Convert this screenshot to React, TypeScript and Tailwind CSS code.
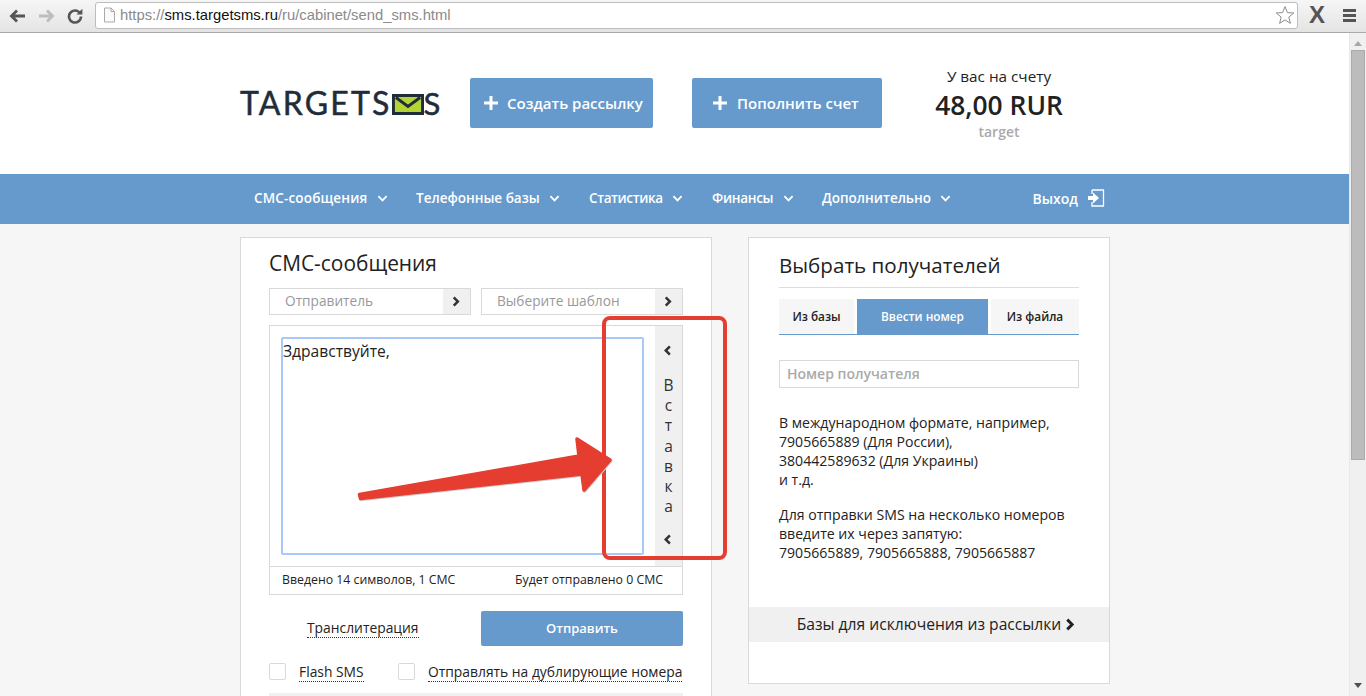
import React from "react";

const Chev = ({ dir = "right", cls = "" }: { dir?: "right" | "left" | "down"; cls?: string }) => {
  const d = dir === "right" ? "M3 1.5 L7.5 6 L3 10.5" : dir === "left" ? "M7.5 1.5 L3 6 L7.5 10.5" : "M1.5 3.5 L6 8 L10.5 3.5";
  return (
    <svg width="12" height="12" viewBox="0 0 12 12" className={cls} fill="none" stroke="currentColor" strokeWidth={dir === "down" ? 2 : 2.7}>
      <path d={d} />
    </svg>
  );
};

const Plus = () => (
  <svg width="14" height="14" viewBox="0 0 14 14" className="shrink-0">
    <path d="M5.5 0h3v5.5H14v3H8.5V14h-3V8.5H0v-3h5.5z" fill="#fff" />
  </svg>
);

const NavItem = ({ label, cls, labelCls }: { label: string; cls: string; labelCls: string }) => (
  <div className={`flex items-center shrink-0 ${cls}`}>
    <span className={`whitespace-nowrap ${labelCls}`}>{label}</span>
    <Chev dir="down" cls="w-[11px] h-[11px] ml-[10px] mt-[1px]" />
  </div>
);

const Dotted = ({ children }: { children: React.ReactNode }) => (
  <span className="border-b border-dotted border-[#333] leading-[17px] text-[13.85px] text-[#222]">{children}</span>
);

const SelectBox = ({ label, cls }: { label: string; cls: string }) => (
  <div className={`flex h-[27px] border border-[#d9d9d9] bg-white ${cls}`}>
    <div className="flex-1 pl-[15px] text-[13.7px] leading-[23px] text-[#999]">{label}</div>
    <div className="w-[27px] bg-[#f0f0f0] flex items-center justify-center text-[#333]">
      <Chev cls="w-[11px] h-[11px]" />
    </div>
  </div>
);

export default function App() {
  return (
    <div className="flex flex-col h-[696px] w-[1366px] overflow-hidden bg-white relative font-['Open_Sans','Noto_Sans',sans-serif]">
      {/* browser toolbar */}
      <div className="h-[33px] shrink-0 flex items-center border-b border-[#a9a9a9] bg-gradient-to-b from-[#f6f6f6] to-[#e4e4e4]">
        <div className="w-[95px] shrink-0 pl-[9px] flex items-center gap-[12px]">
          <svg width="17" height="14" viewBox="0 0 17 14" fill="#555">
            <path d="M7 0.5 L9 2.5 L6 5.5 H16 V8.5 H6 L9 11.5 L7 13.5 L0.5 7z" />
          </svg>
          <svg width="17" height="14" viewBox="0 0 17 14" fill="#bdbdbd">
            <path d="M10 0.5 L8 2.5 L11 5.5 H1 V8.5 H11 L8 11.5 L10 13.5 L16.5 7z" />
          </svg>
          <svg width="16" height="16" viewBox="0 0 16 16" fill="none">
            <path d="M13 5.2 A6 6 0 1 0 14 8.5" stroke="#555" strokeWidth="2.6" />
            <path d="M9.5 6.6 H15.4 V0.8z" fill="#555" />
          </svg>
        </div>
        <div className="w-[1203px] h-[27px] shrink-0 mb-[2px] flex items-center bg-white border border-[#bdbdbd] rounded-[3px] pl-[7px] pr-[2px]">
          <svg width="13" height="16" viewBox="0 0 13 16" fill="none" className="shrink-0">
            <path d="M1.5 1 H8 L11.5 4.5 V15 H1.5z M8 1 V4.5 H11.5" stroke="#aaa" fill="#fafafa" />
          </svg>
          <div className="ml-[4px] flex-1 text-[14.8px] font-['Liberation_Sans',sans-serif] whitespace-nowrap text-[#8a8a8a]">
            https://<span className="text-[#111]">sms.targetsms.ru</span>/ru/cabinet/send_sms.html
          </div>
          <svg width="20" height="20" viewBox="0 0 20 20" fill="none" stroke="#8c8c8c" strokeWidth="1">
            <path d="M10 1.6 L12.4 7.6 L18.8 8 L13.8 12.1 L15.4 18.4 L10 14.9 L4.6 18.4 L6.2 12.1 L1.2 8 L7.6 7.6z" />
          </svg>
        </div>
        <div className="w-[38px] shrink-0 text-center text-[24px] leading-none font-bold text-[#555] font-['Liberation_Sans',sans-serif] mb-[2px]">X</div>
        <div className="flex flex-col gap-[2px] w-[13px] shrink-0 mb-[2px] ml-[7px]">
          <div className="h-[3px] bg-[#555]" />
          <div className="h-[3px] bg-[#555]" />
          <div className="h-[3px] bg-[#555]" />
        </div>
      </div>

      <div className="flex flex-1 min-h-0">
        <div className="flex-1 min-w-0 flex flex-col bg-[#f6f6f6]">
          {/* header */}
          <div className="h-[141px] shrink-0 bg-white">
            <div className="ml-[240px] h-full flex items-start pt-[45px]">
              <div className="w-[230px] shrink-0 h-[50px] flex items-center">
                <div className="flex items-center text-[#1f2d3a] font-['Lato',sans-serif] text-[32px] leading-none tracking-[2.2px] [-webkit-text-stroke:0.5px_#1f2d3a]">
                  <span>TARGETS</span>
                  <svg width="32" height="21" viewBox="0 0 33 21" preserveAspectRatio="none" className="mr-[0px] mt-[2px] shrink-0">
                    <rect width="33" height="21" fill="#1f2d3a" />
                    <rect x="3" y="3" width="27" height="15" fill="#b5d334" />
                    <path d="M4 3.5 L16.5 12.5 L29 3.5" fill="none" stroke="#1f2d3a" strokeWidth="3" />
                  </svg>
                  <span className="tracking-normal text-[31px]">S</span>
                </div>
              </div>
              <div className="w-[183px] h-[50px] shrink-0 rounded-[2px] bg-[#6699cc] text-white text-[15px] font-semibold flex items-center pl-[14px] gap-[9px] whitespace-nowrap">
                <Plus />
                <span>Создать рассылку</span>
              </div>
              <div className="w-[190px] h-[50px] shrink-0 ml-[39px] rounded-[2px] bg-[#6699cc] text-white text-[15px] font-semibold flex items-center pl-[21px] gap-[10px] whitespace-nowrap">
                <Plus />
                <span>Пополнить счет</span>
              </div>
              <div className="w-[234px] shrink-0 flex flex-col items-center -mt-[12px]">
                <div className="text-[15.3px] leading-[20px] text-[#222]">У вас на счету</div>
                <div className="text-[26.4px] leading-[38px] font-semibold text-[#222]">48,00 RUR</div>
                <div className="text-[14px] leading-[15px] font-semibold text-[#aaa]">target</div>
              </div>
            </div>
          </div>
          {/* nav */}
          <div className="h-[50px] shrink-0 bg-[#6699cc]">
            <div className="ml-[254px] w-[851px] h-[48px] flex items-center text-white text-[13.5px] font-semibold">
              <NavItem label="СМС-сообщения" cls="w-[162px]" labelCls="w-[113px] tracking-[0.15px]" />
              <NavItem label="Телефонные базы" cls="w-[173px]" labelCls="w-[123px]" />
              <NavItem label="Статистика" cls="w-[123px]" labelCls="w-[73px] tracking-[-0.4px]" />
              <NavItem label="Финансы" cls="w-[110px]" labelCls="w-[61px] tracking-[-0.3px]" />
              <NavItem label="Дополнительно" cls="" labelCls="w-[108px]" />
              <div className="ml-auto flex items-center gap-[10px] text-[14px]">
                <span>Выход</span>
                <svg width="17" height="18" viewBox="0 0 17 18" fill="none">
                  <path d="M4 1 H15.5 V17 H4 V13 M4 5 V1" stroke="#fff" strokeWidth="1.3" />
                  <path d="M0 7 H5 V3.5 L11 9 L5 14.5 V11 H0z" fill="#fff" />
                </svg>
              </div>
            </div>
          </div>
          {/* content */}
          <div className="flex-1 min-h-0 pt-[13px] pl-[240px] flex items-start gap-[36px] overflow-hidden">
            {/* left */}
            <div className="w-[472px] h-[500px] shrink-0 bg-white border border-[#d9d9d9] pl-[28px] pr-[28px]">
              <div className="text-[20.9px] leading-[28px] text-[#222] mt-[11px]">СМС-сообщения</div>
              <div className="flex gap-[10px] mt-[11px]">
                <SelectBox label="Отправитель" cls="w-[202px]" />
                <SelectBox label="Выберите шаблон" cls="w-[202px]" />
              </div>
              <div className="mt-[10px] w-[414px] border border-[#d9d9d9]">
                <div className="h-[241px] flex border-b border-[#d9d9d9]">
                  <div className="flex-1 pl-[11px] pt-[11px]">
                    <div className="w-[363px] h-[218px] border-2 border-[#a8c8f8] rounded-[2px] pt-[2px] text-[15.6px] leading-[20px] text-[#222]">
                      Здравствуйте,
                    </div>
                  </div>
                  <div className="w-[27px] shrink-0 bg-[#f0f0f0] flex flex-col items-center pt-[19px] text-[#333]">
                    <Chev dir="left" cls="w-[11px] h-[11px]" />
                    <div className="mt-[19px] flex flex-col items-center text-[15.5px] leading-[20.2px] text-[#333]">
                      <span>В</span>
                      <span>с</span>
                      <span>т</span>
                      <span>а</span>
                      <span>в</span>
                      <span>к</span>
                      <span>а</span>
                    </div>
                    <Chev dir="left" cls="w-[11px] h-[11px] mt-[18px]" />
                  </div>
                </div>
                <div className="h-[27px] flex items-center pl-[12px] text-[12.3px] text-[#222]">
                  <span className="w-[233px]">Введено 14 символов, 1 СМС</span>
                  <span>Будет отправлено 0 СМС</span>
                </div>
              </div>
              <div className="flex mt-[16px] w-[414px]">
                <div className="w-[212px] pl-[38px] pt-[4px]">
                  <Dotted>Транслитерация</Dotted>
                </div>
                <div className="w-[202px] h-[35px] pt-[1px] rounded-[2px] bg-[#6699cc] text-white text-[13px] font-semibold flex items-center justify-center">Отправить</div>
              </div>
              <div className="flex items-center mt-[13px] w-[420px]">
                <div className="w-[17px] h-[17px] border border-[#d9d9d9] rounded-[2px]" />
                <div className="ml-[13px] w-[99px]"><Dotted>Flash SMS</Dotted></div>
                <div className="w-[17px] h-[17px] border border-[#d9d9d9] rounded-[2px]" />
                <div className="ml-[13px] whitespace-nowrap"><Dotted>Отправлять на дублирующие номера</Dotted></div>
              </div>
              <div className="mt-[10px] w-[414px] h-[30px] bg-[#f0f0f0]" />
            </div>
            {/* right */}
            <div className="w-[362px] h-[447px] shrink-0 bg-white border border-[#d9d9d9] flex flex-col">
              <div className="mx-[30px] mt-[13px] h-[37px] text-[20.6px] leading-[28px] text-[#222] border-b border-[#dddddd]">Выбрать получателей</div>
              <div className="mx-[30px] mt-[11px] h-[36px] flex items-start border-b border-[#6699cc] text-[11.8px] font-semibold text-[#222]">
                <div className="w-[75px] h-[35px] bg-[#f6f6f6] flex items-center justify-center">Из базы</div>
                <div className="w-[131px] h-[36px] ml-[3px] bg-[#6699cc] text-white flex items-center justify-center">Ввести номер</div>
                <div className="w-[88px] h-[35px] ml-[3px] bg-[#f6f6f6] flex items-center justify-center">Из файла</div>
              </div>
              <div className="mx-[30px] mt-[25px] h-[28px] border border-[#d9d9d9] pl-[7px] text-[14px] font-semibold leading-[26px] text-[#aaa]">Номер получателя</div>
              <div className="mx-[30px] mt-[25px] text-[14.1px] leading-[19px] text-[#222] whitespace-nowrap">
                <div>В международном формате, например,</div>
                <div>7905665889 (Для России),</div>
                <div>380442589632 (Для Украины)</div>
                <div>и т.д.</div>
              </div>
              <div className="mx-[30px] mt-[16px] text-[14.1px] leading-[19px] text-[#222] whitespace-nowrap">
                <div>Для отправки SMS на несколько номеров</div>
                <div>введите их через запятую:</div>
                <div>7905665889, 7905665888, 7905665887</div>
              </div>
              <div className="mt-[45px] h-[35px] bg-[#f0f0f0] flex items-center justify-center gap-[3px] text-[15.65px] text-[#222] font-medium pl-[16px]">
                <span>Базы для исключения из рассылки</span>
                <Chev cls="w-[13px] h-[13px]" />
              </div>
            </div>
          </div>
        </div>
        {/* scrollbar */}
        <div className="w-[17px] shrink-0 bg-[#f0f0f0] border-l border-[#e8e8e8] flex flex-col items-center">
          <div className="mt-[8px] w-0 h-0 border-l-[4px] border-r-[4px] border-b-[5px] border-l-transparent border-r-transparent border-b-[#a8a8a8]" />
          <div className="mt-[4px] w-[14px] h-[410px] bg-[#bcbcbc] border border-[#aaaaaa]" />
          <div className="mt-auto mb-[8px] w-0 h-0 border-l-[4px] border-r-[4px] border-t-[5px] border-l-transparent border-r-transparent border-t-[#505050]" />
        </div>
      </div>

      {/* annotation overlays */}
      <div className="absolute left-[602px] top-[316px] w-[125px] h-[244px] border-[4px] border-[#e53d30] rounded-[8px]" />
      <svg className="absolute left-[350px] top-[430px]" width="270" height="80" viewBox="0 0 270 80">
        <path d="M9.5 64.5 L229 26 L227 9 L260 30 L234 60 L232 44 L10.5 68.5z" fill="#cfcfcf" stroke="#cfcfcf" strokeWidth="3.5" strokeLinejoin="round" transform="translate(0.6 1)" />
        <path d="M9.5 64.5 L229 26 L227 9 L260 30 L234 60 L232 44 L10.5 68.5z" fill="#e53d30" stroke="#e53d30" strokeWidth="3.5" strokeLinejoin="round" />
      </svg>
    </div>
  );
}
